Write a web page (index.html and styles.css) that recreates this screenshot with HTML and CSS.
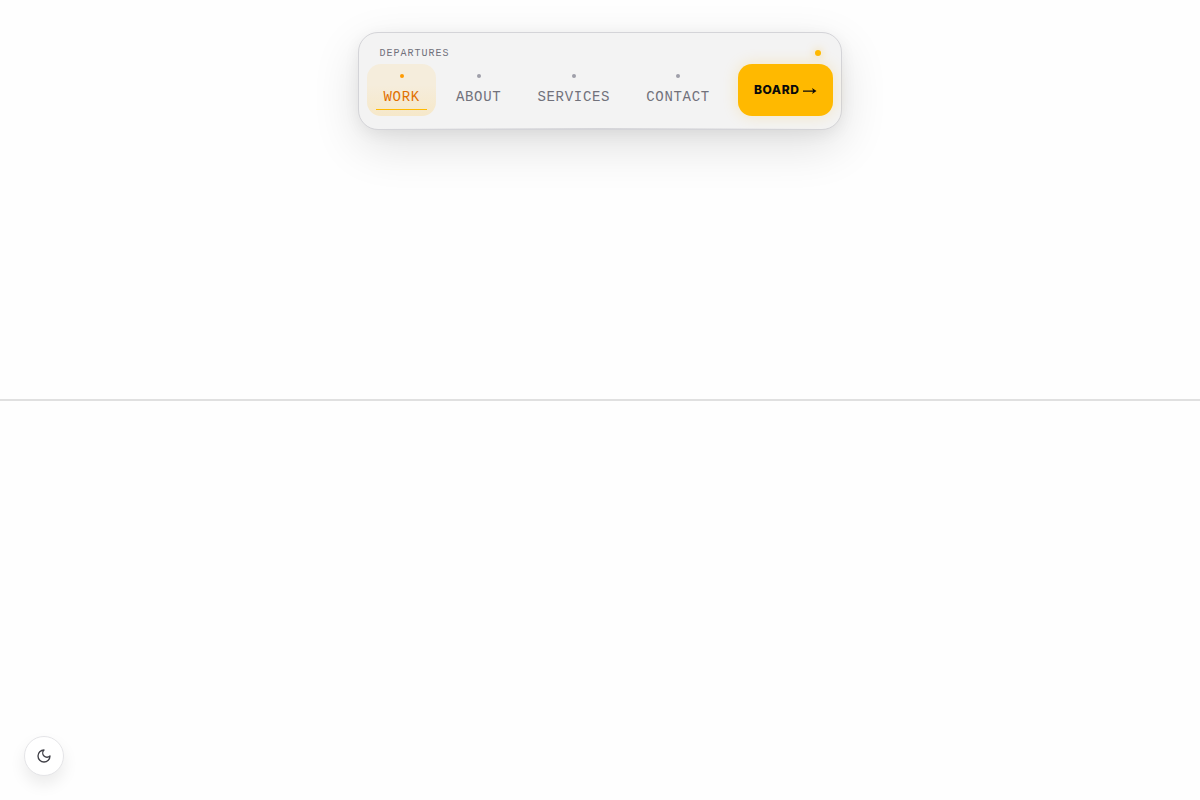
FILE: index.html
```html
<!DOCTYPE html>
<html lang="en">
<head>
  <meta charset="utf-8">
  <meta name="viewport" content="width=device-width, initial-scale=1">
  <title>Departures</title>
  <link rel="stylesheet" href="styles.css">
</head>
<body>
  <main class="stage">
    <nav class="nav" aria-label="Main">
      <div class="nav-header">
        <span class="nav-title">DEPARTURES</span>
        <span class="status"></span>
      </div>
      <div class="nav-row">
        <a class="nav-link active" href="#work">WORK</a>
        <a class="nav-link" href="#about">ABOUT</a>
        <a class="nav-link" href="#services">SERVICES</a>
        <a class="nav-link" href="#contact">CONTACT</a>
        <button class="board-btn" type="button">
          BOARD
          <svg width="14" height="8" viewBox="0 0 14 8">
            <path d="M0 3.4H10L9 1L13.5 4L9 7L10 4.7H0Z" fill="currentColor"/>
          </svg>
        </button>
      </div>
    </nav>
  </main>
  <section class="stage"></section>
  <button class="theme-btn" type="button" aria-label="Toggle dark mode">
    <svg width="16" height="16" viewBox="0 0 24 24" fill="none" stroke="currentColor" stroke-width="2" stroke-linecap="round" stroke-linejoin="round">
      <path d="M12 3a6 6 0 0 0 9 9 9 9 0 1 1-9-9Z"/>
    </svg>
  </button>
</body>
</html>
```
FILE: styles.css
```css
* {
  box-sizing: border-box;
}

body {
  margin: 0;
  background: #fefefe;
  font-family: "Liberation Sans", Arial, sans-serif;
}

.stage {
  display: flex;
  justify-content: center;
  align-items: flex-start;
  height: 50vh;
  padding-top: 32px;
}

main.stage {
  border-bottom: 1px solid #e0e0e0;
}

section.stage {
  border-top: 1px solid #e0e0e0;
}

.nav {
  position: relative;
  padding: 8px 8px 13px;
  background: #f3f3f3;
  border: 1px solid #d4d4d8;
  border-radius: 20px;
  box-shadow: 0 16px 48px rgba(0, 0, 0, 0.12), 0 4px 16px rgba(0, 0, 0, 0.06);
}

.nav::after {
  content: "";
  position: absolute;
  left: 20px;
  right: 20px;
  bottom: 0;
  height: 1px;
  background: linear-gradient(90deg, transparent, #d4d4d8, transparent);
}

.nav-header {
  display: flex;
  justify-content: space-between;
  align-items: center;
  height: 23px;
  padding: 0 12px;
}

.nav-title {
  padding-top: 2px;
  color: #71717b;
  font-family: "Liberation Mono", monospace;
  font-size: 10px;
  letter-spacing: 0.1em;
}

.status {
  width: 6px;
  height: 6px;
  border-radius: 50%;
  background: #ffb900;
  box-shadow: 0 0 8px rgba(255, 185, 0, 0.5);
}

.nav-row {
  display: flex;
  gap: 4px;
}

.nav-link {
  position: relative;
  display: flex;
  flex-direction: column;
  align-items: center;
  gap: 9px;
  height: 52px;
  padding: 10px 16px 8px;
  border-radius: 14px;
  color: #71717b;
  font-family: "Liberation Mono", monospace;
  font-size: 14px;
  line-height: 20px;
  letter-spacing: 0.05em;
  text-decoration: none;
}

.nav-link::before {
  content: "";
  flex-shrink: 0;
  width: 4px;
  height: 4px;
  border-radius: 50%;
  background: #9f9fa9;
}

.nav-link.active {
  color: #e17100;
  background: linear-gradient(#f5eddc 40%, #f6e8c9);
}

.nav-link.active::before {
  background: #fe9a00;
}

.nav-link.active::after {
  content: "";
  position: absolute;
  left: 9px;
  right: 9px;
  bottom: 6px;
  height: 1px;
  background: #ffb900;
}

.board-btn {
  display: flex;
  align-items: center;
  gap: 3px;
  margin-left: 8px;
  padding: 0 16px 1px;
  border: none;
  border-radius: 14px;
  background: #ffb900;
  box-shadow: 0 0 16px rgba(255, 185, 0, 0.2);
  color: #09090b;
  font-family: Inter, sans-serif;
  font-size: 12px;
  font-weight: 800;
  letter-spacing: 0.05em;
  cursor: pointer;
}

.board-btn svg {
  margin-top: 2px;
}

.theme-btn {
  position: fixed;
  left: 24px;
  bottom: 24px;
  display: flex;
  justify-content: center;
  align-items: center;
  width: 40px;
  height: 40px;
  padding: 0;
  border: 1px solid #e4e4e7;
  border-radius: 50%;
  background: #ffffff;
  box-shadow: 0 8px 16px rgba(0, 0, 0, 0.08);
  color: #3f3f46;
  cursor: pointer;
}
```
